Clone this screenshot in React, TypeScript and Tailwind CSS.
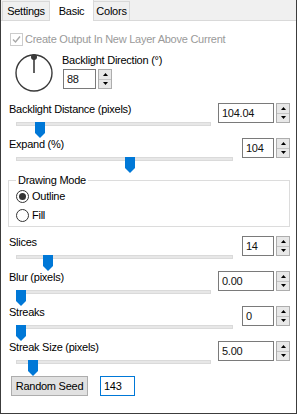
import React from "react";

type SliderRow = {
  label: string;
  value: string;
  thumb: number;
  wide: boolean;
};

const rowsTop: SliderRow[] = [
  { label: "Backlight Distance (pixels)", value: "104.04", thumb: 19, wide: true },
  { label: "Expand (%)", value: "104", thumb: 109, wide: false },
];

const rowsBottom: SliderRow[] = [
  { label: "Slices", value: "14", thumb: 27, wide: false },
  { label: "Blur (pixels)", value: "0.00", thumb: 0, wide: true },
  { label: "Streaks", value: "0", thumb: 0, wide: false },
  { label: "Streak Size (pixels)", value: "5.00", thumb: 12, wide: true },
];

function Spinner({ value, w }: { value: string; w: string }) {
  return (
    <div className="flex h-[20px]">
      <div className={`${w} h-full border border-[#7a7a7a] bg-white pl-[3px] leading-[18px] text-[#111]`}>
        {value}
      </div>
      <div className="ml-[2px] flex h-full w-[14px] flex-col border border-[#adadad] bg-[#e8e8e8]">
        <div className="flex flex-1 items-center justify-center border-b border-[#c4c4c4]">
          <svg width="5" height="3" viewBox="0 0 5 3">
            <polygon points="2.5,0 5,3 0,3" fill="#000" />
          </svg>
        </div>
        <div className="flex flex-1 items-center justify-center">
          <svg width="5" height="3" viewBox="0 0 5 3">
            <polygon points="0,0 5,0 2.5,3" fill="#000" />
          </svg>
        </div>
      </div>
    </div>
  );
}

function Track({ thumb }: { thumb: number }) {
  return (
    <div className="relative ml-[7px] h-[16px]">
      <div className="mt-[5px] h-[4px] border border-[#dadada] bg-[#e7e7e7]" />
      <svg
        className="absolute top-0"
        style={{ left: thumb }}
        width="10"
        height="16"
        viewBox="0 0 10 16"
      >
        <polygon points="0,0 10,0 10,11 5,16 0,11" fill="#0078d7" />
      </svg>
    </div>
  );
}

function Slider({ row }: { row: SliderRow }) {
  return (
    <div className={`flex h-[35px] pl-[8px] pr-[6px] ${row.wide ? "gap-[7px]" : "gap-[9px]"}`}>
      <div className="flex-1">
        <div className="h-[16px] leading-[16px]">{row.label}</div>
        <Track thumb={row.thumb} />
      </div>
      <div className="mt-[2px]">
        <Spinner value={row.value} w={row.wide ? "w-[56px]" : "w-[32px]"} />
      </div>
    </div>
  );
}

function Radio({ checked, label }: { checked: boolean; label: string }) {
  return (
    <div className="ml-[7px] flex h-[14px] items-center gap-[3px]">
      <svg width="13" height="13" viewBox="0 0 13 13">
        <circle cx="6.5" cy="6.5" r="6" fill="#fff" stroke="#333" strokeWidth="1" />
        {checked && <circle cx="6.5" cy="6.5" r="3.5" fill="#333" />}
      </svg>
      <span className="leading-[14px]">{label}</span>
    </div>
  );
}

export default function App() {
  return (
    <div className="h-[414px] w-[297px] border-b border-l border-r border-[#3c3c3c] bg-white font-['Liberation_Sans',Arial,sans-serif] text-[11px] tracking-[-0.25px] text-black">
      {/* tabs */}
      <div className="flex h-[21px] items-end border-b border-[#d9d9d9] bg-[#f0f0f0] pl-[1px]">
        <div className="flex h-[19px] w-[48px] items-center justify-center border-l border-r border-t border-[#d9d9d9]">
          Settings
        </div>
        <div className="relative -mb-px flex h-[22px] w-[44px] items-start justify-center border-r border-t border-[#d9d9d9] bg-white pt-[3px]">
          Basic
        </div>
        <div className="flex h-[19px] w-[36px] items-center justify-center border-r border-t border-[#d9d9d9]">
          Colors
        </div>
      </div>

      {/* checkbox */}
      <div className="mt-[11px] flex h-[14px] items-center gap-[2px] pl-[9px] text-[#9a9a9a]">
        <svg width="13" height="13" viewBox="0 0 13 13">
          <rect x="0.5" y="0.5" width="12" height="12" fill="#fff" stroke="#cccccc" />
          <polyline points="3,6.5 5.5,9 10,3.5" fill="none" stroke="#a8a8a8" strokeWidth="1.4" />
        </svg>
        <span>Create Output In New Layer Above Current</span>
      </div>

      {/* dial */}
      <div className="mt-[8px] flex h-[38px] pl-[14px]">
        <svg width="38" height="38" viewBox="0 0 38 38">
          <circle cx="19" cy="19" r="18" fill="none" stroke="#3a3a3a" strokeWidth="1.4" />
          <line x1="19" y1="19" x2="19" y2="3" stroke="#3a3a3a" strokeWidth="1.6" />
          <circle cx="19" cy="3" r="3" fill="#3a3a3a" />
        </svg>
        <div className="-mt-[1px] ml-[9px]">
          <div className="h-[14px] leading-[14px]">Backlight Direction (°)</div>
          <div className="ml-[1px] mt-[2px]">
            <Spinner value="88" w="w-[33px]" />
          </div>
        </div>
      </div>

      <div className="mt-[9px]">
        {rowsTop.map((r) => (
          <Slider key={r.label} row={r} />
        ))}
      </div>

      {/* drawing mode */}
      <fieldset className="ml-[7px] mr-[6px] mt-[1px] border border-[#dcdcdc] pb-[4px]">
        <legend className="ml-[7px] px-[2px] leading-[16px]">Drawing Mode</legend>
        <div className="mt-[1px]">
          <Radio checked label="Outline" />
        </div>
        <div className="mt-[5px]">
          <Radio checked={false} label="Fill" />
        </div>
      </fieldset>

      <div className="mt-[7px]">
        {rowsBottom.map((r) => (
          <Slider key={r.label} row={r} />
        ))}
      </div>

      {/* seed */}
      <div className="mt-[2px] flex h-[20px] gap-[12px] pl-[10px]">
        <button className="h-[20px] w-[77px] border border-[#adadad] bg-[#e1e1e1] text-center leading-[18px]">
          Random Seed
        </button>
        <div className="h-[20px] w-[35px] border border-[#0078d7] bg-white pl-[3px] leading-[18px]">143</div>
      </div>
    </div>
  );
}
